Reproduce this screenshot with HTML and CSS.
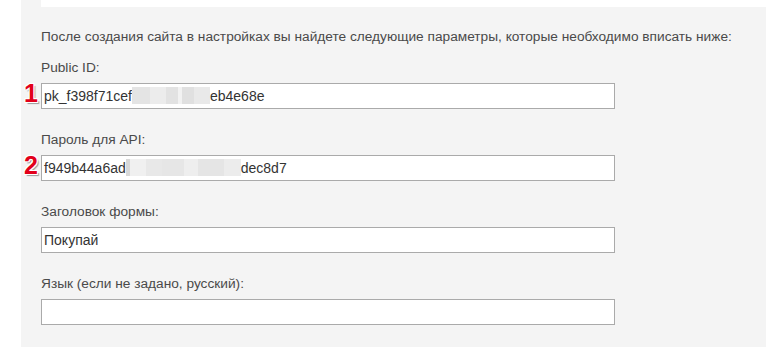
FILE: index.html
```html
<!DOCTYPE html>
<html lang="ru">

<head>
  <meta charset="UTF-8">
  <meta name="viewport" content="width=device-width, initial-scale=1.0">
  <title>Настройки</title>

  <link rel="stylesheet" href="styles.css">
</head>

<body>
  <!-- Gray settings panel -->
  <div class="panel">

    <!-- Bottom edge of the previous card -->
    <div class="top-card"></div>

    <p class="intro">После создания сайта в настройках вы найдете следующие параметры, которые необходимо вписать ниже:</p>

    <div class="field">
      <label for="public-id">Public ID:</label>
      <div class="input-wrap">
        <span class="step">1</span>
        <div class="input" id="public-id">pk_f398f71cef<span class="blur blur-one"></span>eb4e68e</div>
      </div>
    </div>

    <div class="field">
      <label for="api-pass">Пароль для API:</label>
      <div class="input-wrap">
        <span class="step">2</span>
        <div class="input" id="api-pass">f949b44a6ad<span class="blur blur-two"></span>dec8d7</div>
      </div>
    </div>

    <div class="field">
      <label for="form-title">Заголовок формы:</label>
      <div class="input-wrap">
        <div class="input" id="form-title">Покупай</div>
      </div>
    </div>

    <div class="field">
      <label for="lang">Язык (если не задано, русский):</label>
      <div class="input-wrap">
        <div class="input" id="lang"></div>
      </div>
    </div>

  </div>
</body>

</html>
```

FILE: styles.css
```css
/* Default margins removed, base font chosen */
body {
  margin: 0;
  padding: 0;
  background: #ffffff;
  font-family: "Liberation Sans", Arial, sans-serif;
  color: #4a4a4a;
  overflow: hidden;
}

/* Gray block holding the form */
.panel {
  margin-left: 21px;
  padding: 0 0 0 20px;
  background: #f4f4f4;
  height: 347px;
  overflow: hidden;
}

/* White card above the panel, only its bottom is visible */
.top-card {
  height: 7px;
  background: #ffffff;
}

.intro {
  margin: 21px 0 13px;
  font-size: 13.7px;
  line-height: 18px;
}

.field {
  margin-bottom: 22px;
}

label {
  display: block;
  font-size: 13.7px;
  line-height: 18px;
  margin-bottom: 6px;
}

/* The wrapper keeps the number badge next to its input */
.input-wrap {
  position: relative;
  width: 574px;
}

.input {
  box-sizing: border-box;
  height: 26px;
  border: 1px solid #aaaaaa;
  background: #ffffff;
  padding: 0 2px;
  font-size: 14px;
  line-height: 24px;
  color: #333333;
  white-space: nowrap;
  overflow: hidden;
}

/* Red step numbers with a white outline */
.step {
  position: absolute;
  left: -17px;
  top: -3px;
  font-size: 25px;
  font-weight: bold;
  line-height: 26px;
  color: #e2001a;
  text-shadow: 1px 1px 0 #fff, -1px -1px 0 #fff, 1px -1px 0 #fff, -1px 1px 0 #fff, 2px 2px 1px #999;
}

/* Blurred parts of the keys */
.blur {
  display: inline-block;
  height: 17px;
  vertical-align: -3px;
}

.blur-one {
  width: 78px;
  background: linear-gradient(90deg, #e4e4e4 0, #e4e4e4 18px, #ececec 18px, #ececec 34px, #e2e2e2 34px, #e2e2e2 46px, #f2f2f2 46px, #f2f2f2 50px, #e0e0e0 50px, #e0e0e0 62px, #e9e9e9 62px, #e9e9e9 78px);
}

.blur-two {
  width: 115px;
  background: linear-gradient(90deg, #d8d8d8 0, #d8d8d8 4px, #f0f0f0 4px, #f0f0f0 20px, #e8e8e8 20px, #e8e8e8 36px, #e6e6e6 36px, #e6e6e6 58px, #eeeeee 58px, #eeeeee 72px, #e5e5e5 72px, #e5e5e5 98px, #ececec 98px, #ececec 115px);
}
```
